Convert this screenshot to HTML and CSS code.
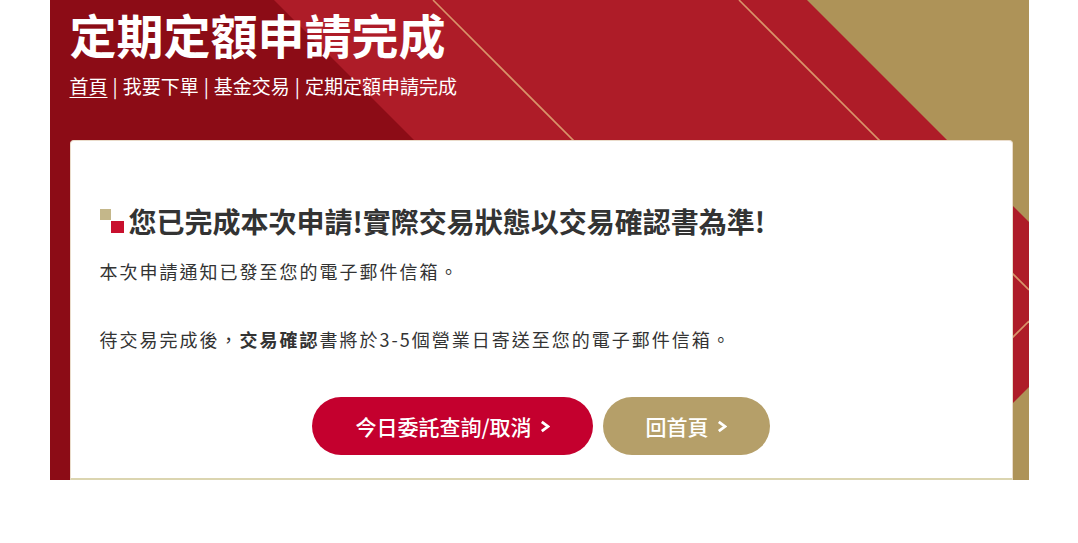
FILE: index.html
```html
<!DOCTYPE html>
<html lang="zh-Hant">
<head>
<meta charset="utf-8">
<title>定期定額申請完成</title>
<link rel="stylesheet" href="styles.css">
</head>
<body>
<div class="page">
  <section class="banner">
    <svg class="banner-bg" viewBox="0 0 979 480" preserveAspectRatio="none" aria-hidden="true">
      <rect x="0" y="0" width="979" height="480" fill="#ae1c28"/>
      <polygon points="0,0 224,0 704,480 0,480" fill="#8c0c16"/>
      <polygon points="757,0 979,0 979,222" fill="#ae9358"/>
      <polygon points="979,387 979,480 886,480" fill="#ae9358"/>
      <line x1="383" y1="0" x2="863" y2="480" stroke="#d9946a" stroke-width="1.6"/>
      <line x1="689" y1="0" x2="979" y2="290" stroke="#d9946a" stroke-width="1.6"/>
      <line x1="979" y1="321" x2="820" y2="480" stroke="#d9946a" stroke-width="1.6"/>
    </svg>
    <h1 class="title">定期定額申請完成</h1>
    <nav class="crumbs"><a class="crumb-home" href="#">首頁</a><span class="sep">|</span>我要下單<span class="sep">|</span>基金交易<span class="sep">|</span>定期定額申請完成</nav>
    <div class="card">
      <h2 class="heading"><span class="mark"><span class="mark-tan"></span><span class="mark-red"></span></span>您已完成本次申請!實際交易狀態以交易確認書為準!</h2>
      <p class="line">本次申請通知已發至您的電子郵件信箱。</p>
      <p class="line line-second">待交易完成後，<b>交易確認</b>書將於3-5個營業日寄送至您的電子郵件信箱。</p>
      <div class="actions">
        <a class="btn btn-red" href="#">今日委託查詢/取消<svg class="chev" viewBox="0 0 10 13"><polyline points="1.8,1.8 8,6.5 1.8,11.2" fill="none" stroke="#fff" stroke-width="2.8" stroke-linejoin="miter"/></svg></a>
        <a class="btn btn-gold" href="#">回首頁<svg class="chev" viewBox="0 0 10 13"><polyline points="1.8,1.8 8,6.5 1.8,11.2" fill="none" stroke="#fff" stroke-width="2.8" stroke-linejoin="miter"/></svg></a>
      </div>
    </div>
  </section>
</div>
</body>
</html>
```
FILE: styles.css
```css
* { box-sizing: border-box; }
body {
  margin: 0;
  background: #fff;
  font-family: "Noto Sans CJK TC", "Noto Sans", "Liberation Sans", sans-serif;
  color: #333;
}
.page {
  width: 979px;
  margin: 0 auto;
}
.banner {
  position: relative;
  height: 480px;
  padding: 0 16px 0 20px;
  display: flex;
  flex-direction: column;
}
.banner-bg {
  position: absolute;
  left: 0;
  top: 0;
  width: 979px;
  height: 480px;
  z-index: 0;
}
.title, .crumbs, .card { position: relative; z-index: 1; }
.title {
  margin: 0;
  font-size: 47px;
  line-height: 68px;
  font-weight: 700;
  color: #fff;
}
.crumbs {
  margin-top: 5px;
  font-size: 19px;
  line-height: 26px;
  color: #fff;
  font-weight: 400;
}
.crumb-home {
  color: #fff;
  text-decoration: underline;
  text-underline-offset: 3px;
  text-decoration-thickness: 1px;
}
.sep { margin: 0 5px; }
.card {
  margin-top: 41px;
  flex: 1;
  background: #fff;
  border: 1px solid #eadccb;
  border-bottom: 2px solid #dbd5b0;
  border-radius: 4px 4px 0 0;
  padding: 60px 29px 0;
}
.heading {
  margin: 0;
  display: flex;
  align-items: center;
  gap: 5px;
  font-size: 28px;
  line-height: 40px;
  font-weight: 700;
  color: #333;
}
.mark {
  position: relative;
  width: 24px;
  height: 24px;
  flex: none;
}
.mark-tan {
  position: absolute;
  left: 0;
  top: 0;
  width: 11px;
  height: 11px;
  background: #c4b78a;
}
.mark-red {
  position: absolute;
  left: 11px;
  top: 12px;
  width: 13px;
  height: 12px;
  background: #c8102e;
}
.line {
  margin: 15px 0 0;
  font-size: 18px;
  line-height: 30px;
  letter-spacing: 2px;
  color: #333;
}
.line-second { margin-top: 38px; }
.line b { font-weight: 700; }
.actions {
  margin-top: 43px;
  display: flex;
  justify-content: center;
  gap: 10px;
}
.btn {
  height: 58px;
  padding: 0 43px;
  border-radius: 29px;
  display: inline-flex;
  align-items: center;
  gap: 8px;
  color: #fff;
  text-decoration: none;
  font-size: 21px;
  font-weight: 500;
}
.btn-red { background: #c4002e; }
.btn-gold { background: #b59f69; }
.chev { width: 10px; height: 13px; }
```
